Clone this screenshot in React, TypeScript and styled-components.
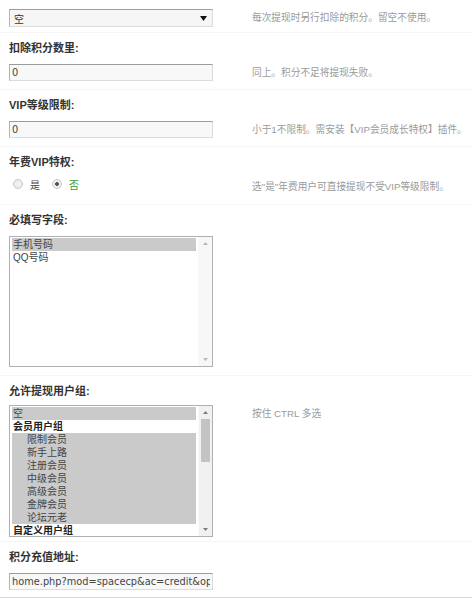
import React from 'react';
import styled, { createGlobalStyle } from 'styled-components';

const GlobalStyle = createGlobalStyle`
  html, body {
    margin: 0;
    padding: 0;
    background: #fff;
  }
  body {
    font-family: "Liberation Sans", "Noto Sans CJK SC", sans-serif;
  }
`;

const Form = styled.div`
  width: 472px;
  padding-top: 5px;
`;

const LabelRow = styled.div`
  height: 27px;
  display: flex;
  align-items: center;
  padding-left: 9px;
  font-size: 11px;
  font-weight: bold;
  color: #333;
`;

const ValueRow = styled.div<{ $pt?: number; $pb?: number; $last?: boolean }>`
  display: flex;
  align-items: flex-start;
  padding: ${(p) => p.$pt ?? 4}px 0 ${(p) => p.$pb ?? 8}px;
  border-bottom: 1px solid ${(p) => (p.$last ? '#d8d8d8' : '#f6f6f6')};
`;

const FieldCell = styled.div`
  width: 252px;
  flex: none;
  padding-left: 9px;
  box-sizing: border-box;
`;

const Tip = styled.div`
  font-size: 9.7px;
  line-height: 17px;
  color: #9a9a9a;
  white-space: nowrap;
`;

const TextInput = styled.input`
  display: block;
  width: 204px;
  height: 17px;
  box-sizing: border-box;
  margin: 0;
  padding: 0 2px;
  border: 1px solid #dcdcdc;
  border-top-color: #9c9c9c;
  border-left-color: #b4b4b4;
  background: #f8f8f8;
  font-family: "DejaVu Sans", "Noto Sans CJK SC", sans-serif;
  font-size: 9.8px;
  color: #444;
  outline: none;
`;

const SelectBox = styled.div`
  width: 204px;
  height: 18px;
  box-sizing: border-box;
  display: flex;
  align-items: center;
  justify-content: space-between;
  padding: 0 5px 0 4px;
  border: 1px solid #dcdcdc;
  border-top-color: #9c9c9c;
  border-left-color: #b4b4b4;
  background: #f6f6f6;
  font-size: 10px;
  color: #333;
`;

const RadioGroup = styled.div`
  height: 12px;
  display: flex;
  align-items: center;
  padding-left: 4px;
`;

const RadioOption = styled.label<{ $active?: boolean }>`
  display: flex;
  align-items: center;
  gap: 7px;
  margin-right: 12px;
  font-size: 10px;
  color: ${(p) => (p.$active ? '#3a9a3a' : '#444')};
`;

const RadioDot = styled.span<{ $checked?: boolean }>`
  width: 8px;
  height: 8px;
  border-radius: 50%;
  border: 1px solid #c8c8c8;
  background: radial-gradient(circle, ${(p) => (p.$checked ? '#555 0 1.6px, #eee 2.2px' : '#f4f4f4 0, #e6e6e6 100%')});
`;

const ListBox = styled.div<{ $height: number }>`
  width: 204px;
  height: ${(p) => p.$height}px;
  box-sizing: border-box;
  display: flex;
  border: 1px solid #b0b0b0;
  background: #fff;
`;

const Options = styled.div`
  flex: 1;
  padding: 1px 2px 1px 2px;
  overflow: hidden;
`;

const Option = styled.div<{ $selected?: boolean; $indent?: boolean; $group?: boolean }>`
  height: 13px;
  line-height: 13px;
  padding-left: ${(p) => (p.$indent ? 15 : 1)}px;
  font-size: 10px;
  font-weight: ${(p) => (p.$group ? 'bold' : 'normal')};
  color: ${(p) => (p.$group ? '#222' : '#444')};
  background: ${(p) => (p.$selected ? '#cacaca' : 'transparent')};
  white-space: nowrap;
`;

const Scrollbar = styled.div<{ $disabled?: boolean }>`
  width: 13px;
  flex: none;
  display: flex;
  flex-direction: column;
  background: ${(p) => (p.$disabled ? '#f7f7f7' : '#f1f1f1')};
  border-left: 1px solid #f9f9f9;
`;

const ScrollArrow = styled.div`
  height: 13px;
  flex: none;
  display: flex;
  align-items: center;
  justify-content: center;
`;

const ScrollTrack = styled.div`
  flex: 1;
  padding: 0 2px;
`;

const ScrollThumb = styled.div<{ $size: number }>`
  height: ${(p) => p.$size}px;
  background: #c3c3c3;
`;

const Triangle = ({ down, color }: { down?: boolean; color: string }) => (
  <svg width="5" height="3" viewBox="0 0 5 3">
    <path d={down ? 'M0 0H5L2.5 3Z' : 'M0 3H5L2.5 0Z'} fill={color} />
  </svg>
);

const groups = [
  { text: '空', selected: true },
  { text: '会员用户组', group: true },
  { text: '限制会员', selected: true, indent: true },
  { text: '新手上路', selected: true, indent: true },
  { text: '注册会员', selected: true, indent: true },
  { text: '中级会员', selected: true, indent: true },
  { text: '高级会员', selected: true, indent: true },
  { text: '金牌会员', selected: true, indent: true },
  { text: '论坛元老', selected: true, indent: true },
  { text: '自定义用户组', group: true },
];

const App: React.FC = () => {
  return (
    <Form>
      <GlobalStyle />
      <ValueRow $pb={5}>
        <FieldCell>
          <SelectBox>
            <span>空</span>
            <svg width="7" height="5" viewBox="0 0 7 5">
              <path d="M0 0H7L3.5 5Z" fill="#111" />
            </svg>
          </SelectBox>
        </FieldCell>
        <Tip>每次提现时另行扣除的积分。留空不使用。</Tip>
      </ValueRow>

      <LabelRow>扣除积分数里:</LabelRow>
      <ValueRow>
        <FieldCell>
          <TextInput defaultValue="0" />
        </FieldCell>
        <Tip>同上。积分不足将提现失败。</Tip>
      </ValueRow>

      <LabelRow>VIP等级限制:</LabelRow>
      <ValueRow>
        <FieldCell>
          <TextInput defaultValue="0" />
        </FieldCell>
        <Tip>小于1不限制。需安装【VIP会员成长特权】插件。</Tip>
      </ValueRow>

      <LabelRow>年费VIP特权:</LabelRow>
      <ValueRow $pb={9}>
        <FieldCell>
          <RadioGroup>
            <RadioOption>
              <RadioDot />
              是
            </RadioOption>
            <RadioOption $active>
              <RadioDot $checked />
              否
            </RadioOption>
          </RadioGroup>
        </FieldCell>
        <Tip>选"是"年费用户可直接提现不受VIP等级限制。</Tip>
      </ValueRow>

      <LabelRow>必填写字段:</LabelRow>
      <ValueRow>
        <FieldCell>
          <ListBox $height={131}>
            <Options>
              <Option $selected>手机号码</Option>
              <Option>QQ号码</Option>
            </Options>
            <Scrollbar $disabled>
              <ScrollArrow>
                <Triangle color="#b8b8b8" />
              </ScrollArrow>
              <ScrollTrack />
              <ScrollArrow>
                <Triangle down color="#b8b8b8" />
              </ScrollArrow>
            </Scrollbar>
          </ListBox>
        </FieldCell>
      </ValueRow>

      <LabelRow>允许提现用户组:</LabelRow>
      <ValueRow $pt={2} $pb={4}>
        <FieldCell>
          <ListBox $height={132}>
            <Options>
              {groups.map((g) => (
                <Option key={g.text} $selected={g.selected} $indent={g.indent} $group={g.group}>
                  {g.text}
                </Option>
              ))}
            </Options>
            <Scrollbar>
              <ScrollArrow>
                <Triangle color="#7a7a7a" />
              </ScrollArrow>
              <ScrollTrack>
                <ScrollThumb $size={43} />
              </ScrollTrack>
              <ScrollArrow>
                <Triangle down color="#7a7a7a" />
              </ScrollArrow>
            </Scrollbar>
          </ListBox>
        </FieldCell>
        <Tip>按住 CTRL 多选</Tip>
      </ValueRow>

      <LabelRow>积分充值地址:</LabelRow>
      <ValueRow $pb={7} $last>
        <FieldCell>
          <TextInput defaultValue="home.php?mod=spacecp&ac=credit&op=buy" />
        </FieldCell>
      </ValueRow>
    </Form>
  );
};

export default App;
